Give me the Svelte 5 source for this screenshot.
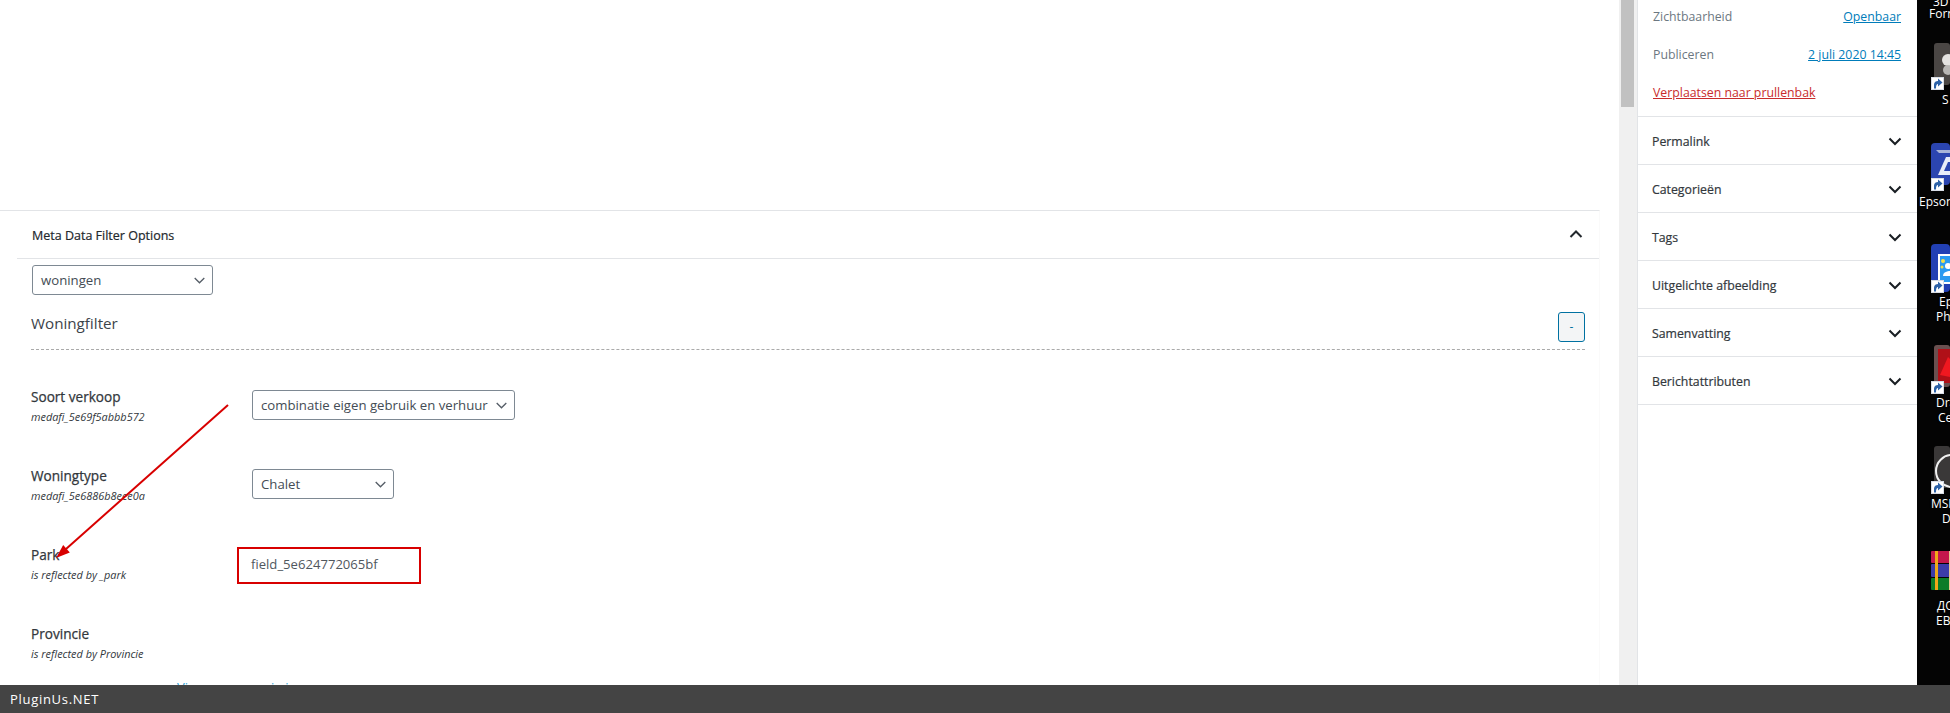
<script>
  const panels = ['Permalink', 'Categorieën', 'Tags', 'Uitgelichte afbeelding', 'Samenvatting', 'Berichtattributen'];
  const fields = [
    { label: 'Soort verkoop', sub: 'medafi_5e69f5abbb572', value: 'combinatie eigen gebruik en verhuur', cls: 'wide' },
    { label: 'Woningtype', sub: 'medafi_5e6886b8eee0a', value: 'Chalet', cls: 'narrow' },
    { label: 'Park', sub: 'is reflected by _park' },
    { label: 'Provincie', sub: 'is reflected by Provincie' }
  ];
</script>

<div class="page">
  <div class="content">
    <main class="editor">
      <section class="metabox">
        <header class="mb-head">
          <span>Meta Data Filter Options</span>
          <svg class="up" width="24" height="24" viewBox="0 0 24 24"><path d="M6.5 15 12 9.5 17.5 15" fill="none" stroke="#23282d" stroke-width="2"/></svg>
        </header>
        <div class="mb-body">
          <div class="select top">
            <span>woningen</span>
            <svg width="11" height="7" viewBox="0 0 11 7"><path d="M.7 1 5.5 5.8 10.3 1" fill="none" stroke="#555d66" stroke-width="1.3"/></svg>
          </div>
          <div class="group-head">
            <h2>Woningfilter</h2>
            <button class="minus">-</button>
          </div>
          <div class="rows">
            {#each fields as f}
              <div class="row">
                <div class="names">
                  <div class="label">{f.label}</div>
                  <div class="sub">{f.sub}</div>
                </div>
                {#if f.value}
                  <div class="select {f.cls}">
                    <span>{f.value}</span>
                    <svg width="11" height="7" viewBox="0 0 11 7"><path d="M.7 1 5.5 5.8 10.3 1" fill="none" stroke="#555d66" stroke-width="1.3"/></svg>
                  </div>
                {/if}
              </div>
            {/each}
          </div>
          <div class="tail"><a href="#x">Vi<span class="g1">i</span><span class="g2">i</span></a></div>
        </div>
      </section>
      <div class="redbox">field_5e624772065bf</div>
      <svg class="arrow" width="240" height="200" viewBox="0 0 240 200">
        <path d="M228 5 66 149" stroke="#d80000" stroke-width="2" fill="none"/>
        <path d="M56 158 63.2 145 69.8 152.4Z" fill="#d80000"/>
      </svg>
    </main>

    <div class="scrollbar"><div class="thumb"></div></div>

    <aside class="sidebar">
      <div class="status">
        <div class="line"><span>Zichtbaarheid</span><a href="#x">Openbaar</a></div>
        <div class="line"><span>Publiceren</span><a href="#x">2 juli 2020 14:45</a></div>
        <div class="line"><a class="trash" href="#x">Verplaatsen naar prullenbak</a></div>
      </div>
      {#each panels as p}
        <div class="panel">
          <span>{p}</span>
          <svg width="24" height="24" viewBox="0 0 24 24"><path d="M6.5 9.5 12 15 17.5 9.5" fill="none" stroke="#191e23" stroke-width="2"/></svg>
        </div>
      {/each}
    </aside>

    <div class="desktop">
      <div class="dt t1">3D</div>
      <div class="dt t2">Forn</div>
      <div class="ic i1"><svg width="16" height="42" viewBox="0 0 16 42"><rect width="16" height="42" rx="3" fill="#4a4644"/><circle cx="14" cy="17" r="6" fill="#e4e2e0"/><circle cx="14" cy="27" r="5" fill="#b8b6b4"/></svg></div>
      <div class="dt t3">S</div>
      <div class="ic i2"><svg width="19" height="42" viewBox="0 0 19 42"><rect width="19" height="42" rx="4" fill="#2b45b0"/><path d="M5 7H19V10H8Z" fill="#a8b4d8"/><path d="M7 32 15 14H19V32Z" fill="#e8ecf8"/><path d="M13 28 17 19H19V28Z" fill="#2b45b0"/></svg></div>
      <div class="dt t4">Epson</div>
      <div class="ic i3"><svg width="19" height="48" viewBox="0 0 19 48"><rect width="19" height="48" rx="4" fill="#2240b4"/><rect x="7" y="10" width="12" height="30" fill="#fff"/><rect x="9" y="12" width="10" height="26" fill="#2b9af0"/><circle cx="12" cy="17" r="2" fill="#f6e04a"/><circle cx="11" cy="23" r="1.5" fill="#f6e04a"/><circle cx="17" cy="22" r="3" fill="#fff"/><path d="M12 32c0-5 7-5 7-5V32Z" fill="#fff"/></svg></div>
      <div class="dt t5">Ep</div>
      <div class="dt t6">Ph</div>
      <div class="ic i4"><svg width="16" height="42" viewBox="0 0 16 42"><rect width="16" height="42" rx="3" fill="#6a5050"/><rect x="4" y="4" width="12" height="34" fill="#b01018"/><path d="M6 30 14 12 16 14V32Z" fill="#f01820"/></svg></div>
      <div class="dt t7">Dra</div>
      <div class="dt t8">Ce</div>
      <div class="ic i5"><svg width="16" height="42" viewBox="0 0 16 42"><rect width="16" height="42" rx="3" fill="#3a3838"/><circle cx="18" cy="25" r="16" fill="none" stroke="#f0f0f0" stroke-width="2"/></svg></div>
      <div class="dt t9">MSI</div>
      <div class="dt t10">D</div>
      <div class="ic i6"><svg width="19" height="39" viewBox="0 0 19 39"><rect width="19" height="12" y="0" rx="1" fill="#c4184c"/><rect width="19" height="13" y="13" rx="1" fill="#3c3ca8"/><rect width="19" height="12" y="27" rx="1" fill="#0c7c28"/><rect x="4" width="3" height="39" fill="#f0a818"/><rect x="18" y="0" width="1" height="39" fill="#e8c890"/></svg></div>
      <div class="dt t11">ДО</div>
      <div class="dt t12">EB</div>
      {#each ['b1','b2','b3','b4','b5'] as b}
        <div class="badge {b}"><svg width="13" height="13" viewBox="0 0 13 13"><rect width="13" height="13" fill="#d8dde6"/><rect x="1" y="1" width="11" height="11" fill="#fff"/><path d="M3 11.5V7.5C3 5 5 4 7 4V1.5L11.5 5.5 7 9.5V7C5.5 7 5 8.5 5 11.5Z" fill="#2d62a8"/></svg></div>
      {/each}
    </div>
  </div>
  <footer class="bar">PluginUs.NET</footer>
</div>

<style>
  :global(body) { margin: 0; background: #fff; }
  .page { width: 1950px; height: 713px; display: flex; flex-direction: column; overflow: hidden; font-family: "Open Sans", "Noto Sans", sans-serif; font-size: 12px; color: #32373c; }
  .content { height: 685px; display: flex; overflow: hidden; }
  .editor { width: 1619px; flex: none; position: relative; padding-top: 210px; box-sizing: border-box; overflow: hidden; }
  .metabox { border-top: 1px solid #e2e4e7; box-sizing: border-box; width: 1600px; border-right: 1px solid #fafafa; height: 600px; }
  .mb-head { height: 47px; margin-left: 17px; padding: 0 11px 0 15px; display: flex; justify-content: space-between; align-items: center; border-bottom: 1px solid #e2e4e7; font-size: 12.5px; color: #23282d; -webkit-text-stroke: 0.2px #23282d; }
  .mb-head span { padding-top: 2px; }
  .up { margin-top: -2px; }
  .mb-body { padding: 6px 14px 0 31px; }
  .select { box-sizing: border-box; height: 30px; border: 1px solid #7e8993; border-radius: 3px; display: flex; align-items: center; justify-content: space-between; padding: 0 7px 0 8px; font-size: 13.2px; color: #444c54; background: #fff; white-space: nowrap; }
  .select.top { width: 181px; margin-left: 1px; }
  .select.wide { width: 263px; }
  .select.narrow { width: 142px; }
  .group-head { display: flex; justify-content: space-between; align-items: center; height: 53px; margin-top: 2px; border-bottom: 1px dashed #aaa; box-sizing: border-box; padding-bottom: 2px; padding-top: 9px; }
  h2 { margin: 0 0 8px; font-size: 15.2px; font-weight: 400; color: #3c434a; }
  .minus { width: 27px; height: 30px; box-sizing: border-box; border: 1px solid #0071a1; border-radius: 3px; background: #f3f5f6; color: #0071a1; padding: 0; font-size: 12px; font-family: inherit; }
  .rows { padding-top: 40px; display: flex; flex-direction: column; gap: 49px; }
  .row { display: flex; height: 30px; }
  .names { width: 221px; flex: none; margin-top: -2px; }
  .label { font-size: 13.6px; line-height: 18px; color: #32373c; -webkit-text-stroke: 0.25px #32373c; }
  .sub { font-style: italic; font-size: 10.9px; line-height: 15px; margin-top: 3px; color: #32373c; }
  .tail { margin-top: 21px; padding-left: 146px; font-size: 13px; line-height: 18px; white-space: nowrap; }
  .tail a { color: #2a9fd6; text-decoration: none; }
  .g1 { margin-left: 83px; }
  .g2 { margin-left: 11px; }
  .redbox { position: absolute; left: 237px; top: 547px; width: 184px; height: 37px; box-sizing: border-box; border: 2px solid #d80000; padding: 6px 12px; font-size: 13.1px; color: #50575e; line-height: 18px; }
  .arrow { position: absolute; left: 0; top: 400px; pointer-events: none; }
  .scrollbar { width: 18px; flex: none; background: #f0f0f0; padding-left: 2px; box-sizing: border-box; }
  .thumb { width: 13px; height: 107px; background: #c1c1c1; }
  .sidebar { width: 280px; flex: none; box-sizing: border-box; border-left: 1px solid #e2e4e7; background: #fff; }
  .status { height: 117px; box-sizing: border-box; border-bottom: 1px solid #e2e4e7; padding: 9px 16px 0 15px; }
  .line { display: flex; justify-content: space-between; height: 38px; align-items: flex-start; line-height: 16px; font-size: 12.3px; color: #6c7781; }
  .line a { color: #007cba; }
  .line a.trash { color: #c92c2c; }
  .panel { height: 48px; box-sizing: border-box; border-bottom: 1px solid #e2e4e7; display: flex; justify-content: space-between; align-items: center; padding: 0 10px 0 14px; font-size: 12.3px; color: #32373c; -webkit-text-stroke: 0.2px #32373c; }
  .panel span { padding-top: 2px; }
  .desktop { flex: 1; background: #040404; position: relative; overflow: hidden; color: #fff; font-family: "Open Sans", sans-serif; font-size: 12px; line-height: 16px; }
  .dt { position: absolute; white-space: nowrap; text-shadow: 0 0 2px #000; }
  .ic, .badge { position: absolute; line-height: 0; }
  .t1 { left: 16px; top: -6px; } .t2 { left: 12px; top: 6px; }
  .t3 { left: 25px; top: 92px; } .t4 { left: 2px; top: 194px; }
  .t5 { left: 22px; top: 294px; } .t6 { left: 19px; top: 309px; }
  .t7 { left: 19px; top: 395px; } .t8 { left: 21px; top: 410px; }
  .t9 { left: 14px; top: 496px; } .t10 { left: 25px; top: 511px; }
  .t11 { left: 20px; top: 598px; } .t12 { left: 19px; top: 613px; }
  .i1 { left: 17px; top: 43px; } .i2 { left: 14px; top: 143px; }
  .i3 { left: 14px; top: 244px; } .i4 { left: 17px; top: 345px; }
  .i5 { left: 17px; top: 446px; } .i6 { left: 14px; top: 551px; }
  .b1 { left: 14px; top: 77px; } .b2 { left: 14px; top: 178px; }
  .b3 { left: 14px; top: 280px; } .b4 { left: 14px; top: 381px; }
  .b5 { left: 14px; top: 481px; }
  .bar { height: 28px; background: #444; color: #fff; font-size: 13px; line-height: 28px; padding-left: 10px; letter-spacing: 0.7px; }
</style>
